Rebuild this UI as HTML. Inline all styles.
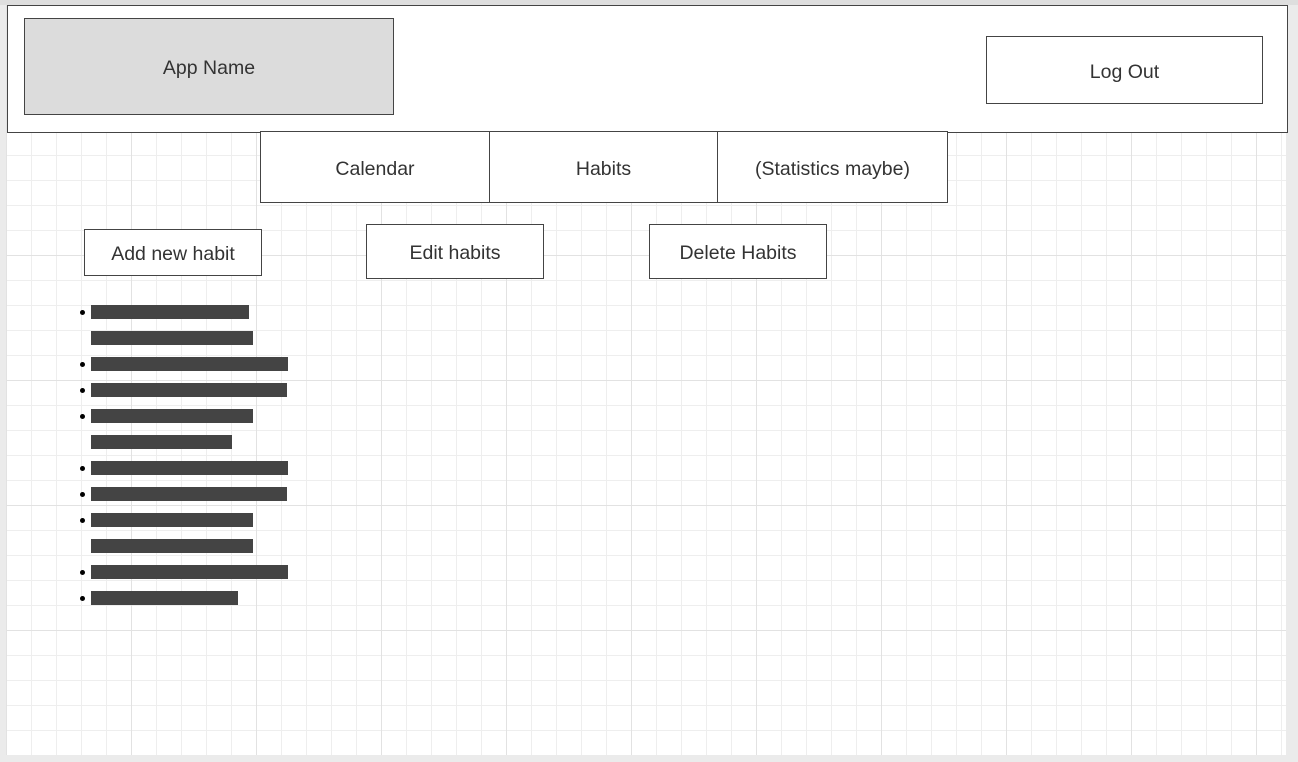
<!DOCTYPE html>
<html><head><style>
*{margin:0;padding:0;box-sizing:border-box}
body{width:1298px;height:762px;background:#ebebeb;position:relative;overflow:hidden;font-family:"Liberation Sans",sans-serif;color:#333}
#top{position:absolute;left:0;top:0;width:1298px;height:5px;background:#dedede}
#canvas{position:absolute;left:6px;top:5px;width:1280px;height:750px;background-color:#fff;
background-image:
linear-gradient(to right,#e2e2e2 1px,transparent 1px),
linear-gradient(to bottom,#e2e2e2 1px,transparent 1px),
linear-gradient(to right,#eeeeee 1px,transparent 1px),
linear-gradient(to bottom,#eeeeee 1px,transparent 1px);
background-size:125px 125px,125px 125px,25px 25px,25px 25px;
background-position:0 0,0 0,0 0,0 0}
.b{position:absolute;border:1px solid #444;background:#fff;display:flex;align-items:center;justify-content:center;font-size:19.5px;color:#333;padding-top:4px}
.bar{position:absolute;left:91px;height:14px;background:#444}
.dot{position:absolute;left:80px;width:5px;height:5px;border-radius:50%;background:#000}
</style></head><body>
<div id="top"></div>
<div id="canvas"></div>
<div class="b" style="left:7px;top:5px;width:1281px;height:128px"></div>
<div class="b" style="left:24px;top:18px;width:370px;height:97px;background:#dcdcdc">App Name</div>
<div class="b" style="left:986px;top:36px;width:277px;height:68px">Log Out</div>
<div class="b" style="left:260px;top:131px;width:230px;height:72px">Calendar</div>
<div class="b" style="left:489px;top:131px;width:229px;height:72px">Habits</div>
<div class="b" style="left:717px;top:131px;width:231px;height:72px">(Statistics maybe)</div>
<div class="b" style="left:84px;top:229px;width:178px;height:47px">Add new habit</div>
<div class="b" style="left:366px;top:224px;width:178px;height:55px">Edit habits</div>
<div class="b" style="left:649px;top:224px;width:178px;height:55px">Delete Habits</div>
<div class="bar" style="top:305px;width:158px"></div><div class="dot" style="top:310px"></div>
<div class="bar" style="top:331px;width:162px"></div>
<div class="bar" style="top:357px;width:197px"></div><div class="dot" style="top:362px"></div>
<div class="bar" style="top:383px;width:196px"></div><div class="dot" style="top:388px"></div>
<div class="bar" style="top:409px;width:162px"></div><div class="dot" style="top:414px"></div>
<div class="bar" style="top:435px;width:141px"></div>
<div class="bar" style="top:461px;width:197px"></div><div class="dot" style="top:466px"></div>
<div class="bar" style="top:487px;width:196px"></div><div class="dot" style="top:492px"></div>
<div class="bar" style="top:513px;width:162px"></div><div class="dot" style="top:518px"></div>
<div class="bar" style="top:539px;width:162px"></div>
<div class="bar" style="top:565px;width:197px"></div><div class="dot" style="top:570px"></div>
<div class="bar" style="top:591px;width:147px"></div><div class="dot" style="top:596px"></div>
</body></html>
